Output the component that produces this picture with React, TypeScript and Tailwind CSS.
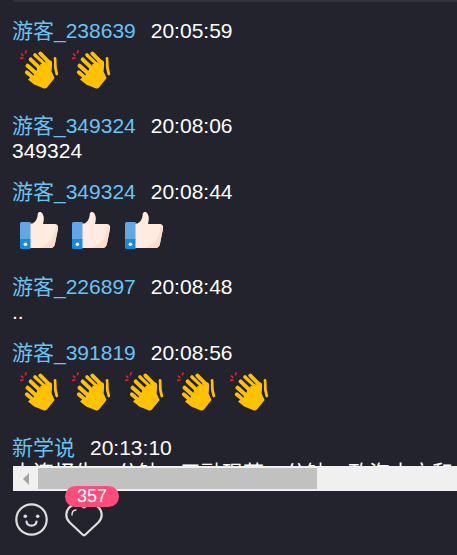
import clsx from 'clsx';

type IconName = 'clap' | 'thumb';

interface Message {
  id: number;
  user: string;
  time: string;
  text?: string;
  icon?: IconName;
  count?: number;
}

const messages: Message[] = [
  { id: 1, user: '游客_238639', time: '20:05:59', icon: 'clap', count: 2 },
  { id: 2, user: '游客_349324', time: '20:08:06', text: '349324' },
  { id: 3, user: '游客_349324', time: '20:08:44', icon: 'thumb', count: 3 },
  { id: 4, user: '游客_226897', time: '20:08:48', text: '..' },
  { id: 5, user: '游客_391819', time: '20:08:56', icon: 'clap', count: 5 },
  {
    id: 6,
    user: '新学说',
    time: '20:13:10',
    text: '大连择生一分钟，五融现若一分钟，政海十方和',
  },
];

const ClapIcon = () => (
  <svg viewBox="0 0 48 48" className="inline-block size-12" role="img" aria-label="clap">
    <g stroke="#e6212e" strokeWidth="1.6" fill="none">
      <path d="M7 13.4 10.6 13M8 8.6 10.4 10.8M13.4 5.2 12.2 8.4" />
    </g>
    <g stroke="#ffc200" strokeLinecap="round" fill="none">
      <path strokeWidth="4.2" d="M27.4 8.8 37 18.4M17.8 14.4 30 26M14.6 20.8 25 30M14 27.4 23 34.6" />
      <path strokeWidth="3.6" d="M22 10 33 20" />
      <path strokeWidth="2.8" d="M42 13.4 42.4 23 43.8 29" />
    </g>
    <path
      fill="#ffc200"
      d="M27 19 35 18 37.6 15.2Q39.4 16.2 39.2 19L38.6 26.5 41.6 33 34 42.4Q32.6 44 31 43.4L21.2 39.6 15 34.4 20 30Z"
    />
    <g stroke="#22232c" strokeLinecap="round" fill="none">
      <path strokeWidth="1.1" d="M24.8 9.6 31.6 16.4M20 13 27 19.8M16 17.6 23.4 24.8M14.2 24.2 20.4 29.8" />
      <path strokeWidth="1.3" d="M40 14.8 39.8 25 41.8 31.4" />
    </g>
  </svg>
);

const ThumbIcon = () => (
  <svg viewBox="0 0 48 48" className="inline-block size-12" role="img" aria-label="thumb up">
    <path
      fill="#ffebdf"
      d="M17 17.5H19.5C24 15 24.4 11.5 24.8 7.8 25.2 5.5 28.4 5.5 29.6 7.8 31.4 11 31 14.5 30 18H41.5C44.4 18 45.6 20 45 22.8L42 37.5C41.2 41 40 42 37 42H17Z"
    />
    <path
      fill="#ffdccb"
      d="M44.6 20.5C45.2 21.4 45.2 22 45 22.8L42 37.5C41.2 41 40 42 37 42H26C36 38.5 41.5 32 42 22.5Z"
    />
    <path fill="#64a5e3" d="M8.5 16H17.5V33.5H7V17.5Q7 16 8.5 16Z" />
    <path fill="#168ade" d="M7 33H17.5V43H8.5Q7 43 7 41.5Z" />
    <circle cx="12.4" cy="38.2" r="1.8" fill="#fff" />
  </svg>
);

const icons = { clap: ClapIcon, thumb: ThumbIcon };

const MessageItem = ({ message }: { message: Message }) => {
  const Icon = message.icon && icons[message.icon];

  return (
    <li className="mb-[18px] whitespace-nowrap">
      <div className="flex h-6 gap-[15px]">
        <span className="text-[#68c4f5]">{message.user}</span>
        <time>{message.time}</time>
      </div>
      {Icon ? (
        <div className="h-[53px] pt-0.5 pl-px text-base leading-6">
          {Array.from({ length: message.count ?? 1 }, (_, i) => (
            <span key={i}>
              <Icon />{' '}
            </span>
          ))}
        </div>
      ) : (
        <p className="h-6 leading-[26px]">{message.text}</p>
      )}
    </li>
  );
};

const ScrollTrack = () => (
  <div className="ml-px flex h-[25px] bg-[#f0f0f0]">
    <button type="button" aria-label="Scroll left" className="flex w-[25px] items-center justify-center">
      <svg viewBox="0 0 6 12" className="h-3 w-1.5">
        <path d="M6 0V12L0 6Z" fill="#a3a3a3" />
      </svg>
    </button>
    <div className="flex-1 py-0.5">
      <div className="h-full w-2/3 bg-[#c1c1c1]" />
    </div>
  </div>
);

const Toolbar = () => (
  <div className="flex gap-[15px] pt-3">
    <button type="button" aria-label="Emoji" className="ml-0.5">
      <svg viewBox="0 0 36 36" className="size-9" fill="none" stroke="#dedede" strokeWidth="2.2">
        <circle cx="17.5" cy="16.5" r="15.2" />
        <path d="M12.5 18.5C13 24 22 24 22.5 18.5" strokeLinecap="round" />
        <g fill="#dedede" stroke="none">
          <circle cx="11.3" cy="13.3" r="1.8" />
          <circle cx="23.7" cy="13.3" r="1.8" />
        </g>
      </svg>
    </button>
    <button type="button" aria-label="Like" className="relative">
      <svg viewBox="0 0 38 36" className="h-9 w-[38px]" fill="none" stroke="#dedede" strokeLinecap="round">
        <path
          strokeWidth="2.2"
          strokeLinejoin="round"
          d="M19 4.5C14.5.5 8.5.2 4.5 4.2.2 8.6.2 15 4.5 19.2L17.5 31.5Q19 33 20.5 31.5L33.5 19.2C37.8 15 37.8 8.6 33.5 4.2 29.5.2 23.5.5 19 4.5Z"
        />
        <path strokeWidth="1.4" d="M7 12C7 9 8.5 7.2 11 7" />
      </svg>
      <span className="absolute -top-[17px] left-0 w-[54px] rounded-full bg-[#ff4d79] text-lg leading-[21px] text-white">
        357
      </span>
    </button>
  </div>
);

const App = () => {
  return (
    <main
      className={clsx(
        'min-h-screen overflow-hidden bg-[#22232c] pl-3 text-[21px] leading-6 text-white',
        "font-['Liberation_Sans','Noto_Sans_CJK_SC',sans-serif]",
      )}
    >
      <div className="ml-px h-0.5 rounded-bl-sm bg-[#30313b]" />
      <ul className="h-[464px] overflow-hidden pt-[17px]">
        {messages.map(message => (
          <MessageItem key={message.id} message={message} />
        ))}
      </ul>
      <ScrollTrack />
      <Toolbar />
    </main>
  );
};

export default App;
